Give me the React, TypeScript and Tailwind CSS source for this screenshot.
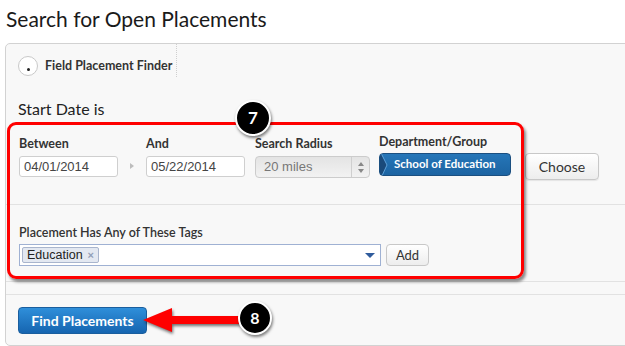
import React from "react";

const sans = "font-['Liberation_Sans',Arial,sans-serif]";

function DateInput({ value }: { value: string }) {
  return (
    <div
      className={`mt-[4px] h-[21px] w-[99px] rounded-[3px] border border-[#cfcfcf] bg-white pl-[4px] text-[13px] leading-[19px] text-[#444] ${sans}`}
    >
      {value}
    </div>
  );
}

function Label({ children, className = "" }: { children: React.ReactNode; className?: string }) {
  return <div className={`text-[12.5px] font-bold leading-[16px] text-[#333] ${className}`}>{children}</div>;
}

export default function App() {
  return (
    <div className="relative h-[346px] w-[625px] overflow-hidden bg-white font-['Lato',sans-serif] text-[#222]">
      <h1 className="pl-[6px] pt-[5px] text-[21px] leading-[28px] text-[#1a1a1a]">Search for Open Placements</h1>

      <div className="ml-[5px] mt-[10px] flex h-[303px] w-[660px] flex-col rounded-l-[5px] border border-[#d2d2d2] bg-[#f8f8f8]">
        {/* tab */}
        <div className="flex h-[33px]">
          <div className="flex w-[171px] items-start border-r border-dotted border-[#cfcfcf] pl-[12px] pt-[12px]">
            <div className="flex h-[20px] w-[20px] items-end justify-center rounded-full border border-[#c9c9c9] bg-white pb-[4px] pl-[1px]">
              <div className="h-[3px] w-[3px] rounded-full bg-[#222]" />
            </div>
            <span className="ml-[7px] mt-[2px] text-[12.5px] font-bold leading-[16px] text-[#333]">Field Placement Finder</span>
          </div>
        </div>

        <div className="ml-[12px] mt-[22px] text-[16px] leading-[20px] text-[#222]">Start Date is</div>

        {/* dates row */}
        <div className="ml-[13px] mt-[15px] flex items-start">
          <div className="mt-[2px]">
            <Label>Between</Label>
            <DateInput value="04/01/2014" />
          </div>
          <div className="ml-[12px] mt-[29px] h-0 w-0 border-y-[3.5px] border-l-[4px] border-y-transparent border-l-[#bdbdbd]" />
          <div className="ml-[12px] mt-[2px]">
            <Label>And</Label>
            <DateInput value="05/22/2014" />
          </div>
          <div className="ml-[10px] mt-[2px]">
            <Label>Search Radius</Label>
            <div className="mt-[4px] flex h-[22px] w-[115px] rounded-[4px] border border-[#cccccc] bg-gradient-to-b from-[#e4e4e4] to-[#f2f2f2]">
              <span className={`flex-1 pl-[8px] text-[13px] leading-[20px] text-[#777] ${sans}`}>20 miles</span>
              <div className="flex w-[18px] items-center justify-center border-l border-[#cfcfcf]">
                <svg width="6" height="11" viewBox="0 0 6 11">
                  <path d="M0 4 L3 0 L6 4 Z M0 7 L3 11 L6 7 Z" fill="#888" />
                </svg>
              </div>
            </div>
          </div>
          <div className="ml-[9px]">
            <Label>Department/Group</Label>
            <div className="mt-[3px] flex h-[23px] w-[132px] overflow-hidden rounded-[4px] border border-[#1b4f80] bg-gradient-to-b from-[#2676b8] to-[#1c64a2]">
              <svg width="9" height="23" viewBox="0 0 9 23" className="shrink-0">
                <path d="M0 0 L1 0 L7 11 L1 23 L0 23 Z" fill="#1a4a7a" />
                <path d="M1 -1 L7 11 L1 24" stroke="#5d9fd6" strokeWidth="1" fill="none" />
              </svg>
              <span className="ml-[5px] text-[11.5px] font-bold leading-[20px] text-white">School of Education</span>
            </div>
          </div>
          <button className="ml-[14px] mt-[19px] h-[27px] w-[74px] rounded-[4px] border border-[#c8c8c8] bg-gradient-to-b from-white to-[#ededed] text-[14px] text-[#333] shadow-[0_1px_1px_rgba(0,0,0,0.08)]">
            Choose
          </button>
        </div>

        <div className="mt-[24px] border-t border-[#e2e2e2]" />

        {/* tags */}
        <div className="ml-[13px] mt-[20px]">
          <div className="text-[12.5px] font-semibold leading-[16px] text-[#333]">Placement Has Any of These Tags</div>
          <div className="mt-[3px] flex items-start">
            <div className="flex h-[22px] w-[362px] items-center border border-[#9fb1d3] bg-white pl-[2px] pr-[5px]">
              <div className={`flex h-[16px] items-center rounded-[2px] border border-[#a9b5cd] bg-[#e3e8f1] pl-[4px] pr-[4px] text-[12.5px] text-[#222] ${sans}`}>
                Education
                <span className="ml-[5px] text-[11px] font-bold text-[#93a0b8]">×</span>
              </div>
              <div className="flex-1" />
              <div className="h-0 w-0 border-x-[5px] border-t-[5px] border-x-transparent border-t-[#2f5b9c]" />
            </div>
            <button className="ml-[5px] h-[22px] w-[43px] rounded-[4px] border border-[#c8c8c8] bg-gradient-to-b from-white to-[#ededed] text-[13px] leading-[20px] text-[#333]">
              Add
            </button>
          </div>
        </div>

        <div className="mt-[15px] border-t border-[#e2e2e2]" />
        <div className="mt-[12px] border-t border-[#e2e2e2]" />

        <div className="ml-[12px] mt-[12px]">
          <button className="h-[27px] w-[129px] rounded-[4px] border border-[#1a5e9e] bg-gradient-to-b from-[#2f8fda] to-[#1665b0] text-[14px] font-bold text-white">
            Find Placements
          </button>
        </div>
      </div>

      {/* annotations */}
      <div className="pointer-events-none absolute left-[7px] top-[122px] h-[157px] w-[517px] rounded-[9px] border-[3px] border-[#ff0000] shadow-[2px_3px_3px_rgba(0,0,0,0.45)]" />

      <div className="absolute left-[235px] top-[100px] flex h-[36px] w-[36px] items-center justify-center rounded-full border-[2.5px] border-white bg-black text-[17px] font-bold text-white shadow-[1px_2px_3px_rgba(0,0,0,0.5)]">
        7
      </div>

      <svg className="absolute left-[140px] top-[302px] drop-shadow-[1px_2px_1.5px_rgba(0,0,0,0.55)]" width="110" height="36" viewBox="0 0 110 36">
        <path d="M3 18 L32 6 L32 14 L108 14 L108 22 L32 22 L32 30 Z" fill="#ff0000" />
      </svg>

      <div className="absolute left-[238px] top-[301px] flex h-[34px] w-[34px] items-center justify-center rounded-full border-[2.5px] border-white bg-black text-[16px] font-bold text-white shadow-[1px_2px_3px_rgba(0,0,0,0.5)]">
        8
      </div>
    </div>
  );
}
